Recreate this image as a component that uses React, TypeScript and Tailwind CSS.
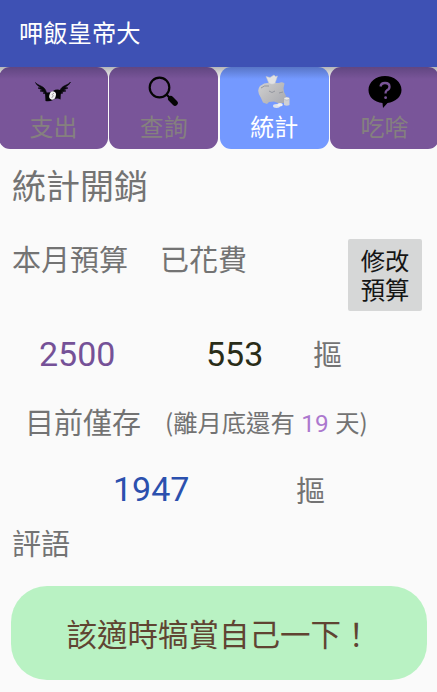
import React from "react";

function MoneyIcon() {
  return (
    <svg width="36" height="22" viewBox="0 0 36 22" fill="none">
      <path d="M.5 1.5C3 5 9 4.500 11 10L11.500 13L8 12.200L9.500 11L5 10L7.500 9L3 7L6 6.500Q1.500 4.500 .5 1.500ZM35.500 1C33 4.500 27 4 25 9.500L24.500 13L28 12L26.500 11L31 10L28.500 9L33 7L30 6.200Q34.500 4 35.500 1Z" fill="#08080c" stroke="#08080c" strokeWidth=".6" />
      <path d="M10 11Q14 12.500 18 10Q22 7.500 26 9.500L25.500 18.500Q22 16.500 18 19Q14 21 10.500 20Z" fill="#050507" />
      <ellipse cx="17.600" cy="14.500" rx="3.200" ry="4.200" transform="rotate(18 17.600 14.500)" fill="#f1f1f1" />
      <path d="M19 12L17.200 13.600L18.300 14.800L16.800 16.800" stroke="#888" strokeWidth=".8" />
    </svg>
  );
}

function SearchIcon() {
  return (
    <svg width="31" height="31" viewBox="0 0 31 31" fill="none" stroke="#050505">
      <circle cx="11.500" cy="11.500" r="9.800" strokeWidth="2.200" />
      <path d="M18.500 18.500L22 22" strokeWidth="2.200" />
      <path d="M22.800 22.800L27 27" strokeWidth="5.600" strokeLinecap="round" />
    </svg>
  );
}

function PiggyIcon() {
  return (
    <svg width="34" height="36" viewBox="0 0 34 36" fill="none">
      <defs>
        <linearGradient id="pig" x1="4" y1="8" x2="26" y2="30" gradientUnits="userSpaceOnUse">
          <stop stopColor="#cfcfd0" />
          <stop offset=".5" stopColor="#bcbcbe" />
          <stop offset="1" stopColor="#a9abb1" />
        </linearGradient>
      </defs>
      <path d="M3 12Q8 8 14 9L22 9Q25 7.500 27.500 9.500L26.500 14L27 18L29 22L27 29H21L17 27.500L12 28L10 30L6 28.500L4 24Q-1 17 3 12Z" fill="url(#pig)" />
      <path d="M9 2.500L13 3.500L17 1L18.500 2.500L20.500 2L18 9.500Q15 11 12 9.500Z" fill="#e2e2e3" stroke="#c3c5ca" strokeWidth=".5" />
      <path d="M12 17Q15 20 18 17M22 19L26 18M4 14Q7 11 12 12" stroke="#8f929b" strokeWidth=".9" />
      <path d="M27 24.500V31Q29.700 32.500 32.500 31V24.500" fill="#cfd0d4" />
      <ellipse cx="29.750" cy="24.500" rx="2.800" ry="1.500" fill="#ececec" stroke="#a4a7ae" strokeWidth=".5" />
      <ellipse cx="19.500" cy="32" rx="3.500" ry="1.900" fill="#dde2ed" />
      <ellipse cx="23" cy="30.800" rx="2.800" ry="1.700" fill="#eff0f3" />
    </svg>
  );
}

function HelpIcon() {
  return (
    <svg width="34" height="34" viewBox="0 0 34 34" fill="none">
      <path d="M17 1C26 1 33.500 7 33.500 15C33.500 22 27 27 19.500 28L15 33L14.500 28C6 27 .5 22 .5 15C.5 7 8 1 17 1Z" fill="#000" />
      <path d="M12.500 11.500Q13 8 17 8Q21.500 8 21.500 11.700Q21.500 14 19 15.200Q17.500 16 17.500 18.500" stroke="#795498" strokeWidth="2.300" />
      <circle cx="17.600" cy="22.700" r="1.400" fill="#795498" />
    </svg>
  );
}

const tabs = [
  { label: "支出", icon: <MoneyIcon />, active: false },
  { label: "查詢", icon: <SearchIcon />, active: false },
  { label: "統計", icon: <PiggyIcon />, active: true },
  { label: "吃啥", icon: <HelpIcon />, active: false },
];

export default function App() {
  return (
    <div className="flex h-[692px] w-[437px] flex-col overflow-hidden bg-[#fafafa] font-['Noto_Sans_CJK_TC',sans-serif] text-[#737373]">
      <header className="flex h-[67px] shrink-0 items-center bg-[#3e51b4] pb-[2px] pl-[19px] text-[24.3px] text-white">
        呷飯皇帝大
      </header>
      <nav className="-ml-px grid h-[82px] w-[440px] shrink-0 grid-cols-4 gap-[1.5px] bg-linear-to-b from-[#b5b5b7] to-[#fafafa] to-[12px]">
        {tabs.map((t) => (
          <button
            key={t.label}
            className={
              "flex flex-col items-center rounded-[11px] bg-linear-to-b to-[12px] " +
              (t.active ? "from-[#5875c6] to-[#7499ff] text-white" : "from-[#614681] to-[#795599] text-[#85807f]")
            }
          >
            <span className="flex h-[49px] items-center justify-center">{t.icon}</span>
            <span className="text-[24px] leading-[20px]">{t.label}</span>
          </button>
        ))}
      </nav>
      <main className="flex flex-col">
        <h1 className="h-[74px] pl-[12px] text-[34px] leading-[71px]">統計開銷</h1>
        <div className="flex h-[96px] pl-[12px] text-[29px] leading-[71px]">
          <span className="w-[148px]">本月預算</span>
          <span className="w-[188px]">已花費</span>
          <button className="mt-[16px] flex h-[72px] w-[74px] flex-col items-center justify-center rounded-[2px] bg-[#d6d7d7] pb-[2px] text-[24.3px] leading-[29px] text-[#151515]">
            <span>修改</span>
            <span>預算</span>
          </button>
        </div>
        <div className="flex h-[70px] items-center pl-[39px] text-[29px]">
          <span className="w-[167px] font-['Roboto'] text-[34px] text-[#755197]">2500</span>
          <span className="w-[107px] font-['Roboto'] text-[34px] text-[#292c18]">553</span>
          <span className="pb-px">摳</span>
        </div>
        <div className="flex h-[66px] items-center pl-[25px]">
          <span className="w-[140px] pb-px text-[29px]">目前僅存</span>
          <span className="pt-[2px] text-[24.3px] [word-spacing:1.2px]">
            (離月底還有 <span className="font-['Roboto'] text-[#ac78ce]">19</span> 天)
          </span>
        </div>
        <div className="flex h-[68px] items-center pl-[113px] text-[29px]">
          <span className="w-[183px] font-['Roboto'] text-[34px] text-[#2b50ae]">1947</span>
          <span className="pt-px">摳</span>
        </div>
        <div className="h-[63px] pl-[12px] text-[29px] leading-[38px]">評語</div>
        <div className="ml-[11px] flex h-[94px] w-[416px] items-center justify-center rounded-[36px] bg-[#b9f2c3] pt-[2px] text-[30.5px] text-[#604432]">
          該適時犒賞自己一下！
        </div>
      </main>
    </div>
  );
}
